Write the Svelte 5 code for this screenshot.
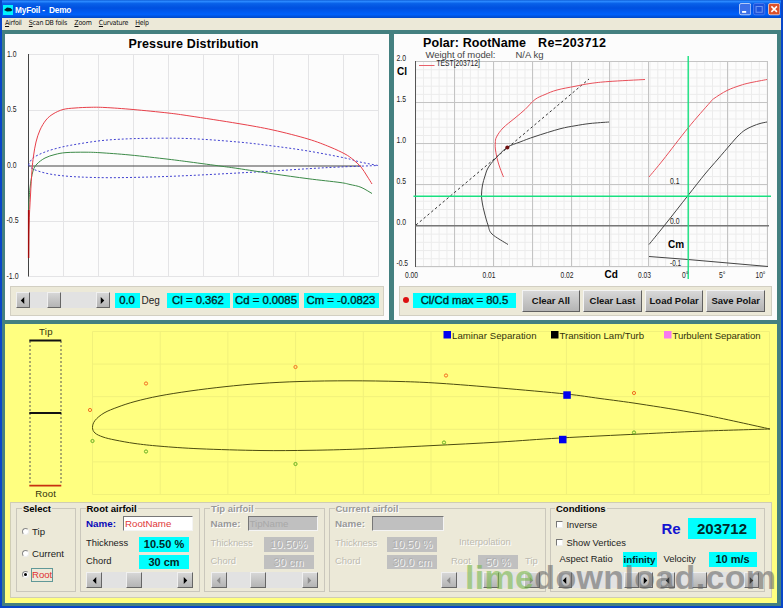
<script>
  const menu = ['Airfoil', 'Scan DB foils', 'Zoom', 'Curvature', 'Help'];

  // smooth path through a list of points
  const curve = (p) => {
    let d = `M${p[0][0]} ${p[0][1]}`;
    for (let i = 0; i < p.length - 1; i++) {
      const a = p[i - 1] || p[i];
      const b = p[i];
      const c = p[i + 1];
      const e = p[i + 2] || c;
      d += `C${b[0] + (c[0] - a[0]) / 6} ${b[1] + (c[1] - a[1]) / 6} ${c[0] - (e[0] - b[0]) / 6} ${c[1] - (e[1] - b[1]) / 6} ${c[0]} ${c[1]}`;
    }
    return d;
  };
  const steps = (from, step, count) => Array.from({ length: count }, (_, i) => from + i * step);

  // pressure
  const cpUpper = [[28.5, 258], [29, 225], [30.5, 195], [32, 170], [33.5, 156], [36, 142], [40, 130], [46, 120], [53, 114], [63, 109.5], [75, 108], [90, 107.3], [105, 107.5], [133, 109.5], [168, 113], [190, 116], [238, 123.5], [273, 130], [308, 139], [330, 147], [345, 154], [353, 159.5], [361, 167], [367, 176], [372, 184]];
  const cpLower = [[28.5, 258], [28.8, 210], [30, 188], [33, 171], [37, 164], [45, 158], [55, 154.5], [66, 152.6], [85, 152.2], [100, 152.7], [130, 155], [168, 159.2], [190, 162], [222, 166.3], [238, 168.5], [273, 173.8], [308, 178.7], [340, 182.5], [350, 184.5], [361, 187.3], [372, 193.5]];
  const shapeTop = [[28.5, 165], [33, 158], [45, 152], [60, 147.5], [75, 144.5], [98, 141], [120, 139.2], [150, 138.3], [190, 138.6], [238, 142], [273, 146], [308, 151], [345, 158], [360, 162], [378, 165.5]];
  const shapeBottom = [[28.5, 165], [33, 169], [45, 173], [60, 175.5], [80, 177], [110, 177.7], [150, 177], [190, 175.5], [238, 173], [273, 171], [308, 168.7], [340, 167], [378, 165.5]];

  // polars
  const redPolar = [[503.5, 177], [500, 168], [497.5, 160], [495.5, 150], [495.3, 143], [496.5, 137], [503, 128], [515, 118], [525, 109.5], [535, 99.5], [545, 94.5], [557, 90], [575, 86.3], [590, 83.5], [609, 81.5], [645, 79.5]];
  const blackPolar = [[508, 244.5], [492, 234], [488, 225], [484.5, 213], [482.3, 203], [481.5, 195], [482.5, 185], [485, 176], [488, 168], [495, 159], [507, 147.5], [520, 142], [535, 136.5], [560, 128.8], [575, 125.8], [590, 123.5], [609, 122]];
  const redLift = [[649, 177], [663, 160], [688, 128], [710, 102.5], [714, 98.5], [727, 90.5], [740, 85.5], [750, 82.8], [767, 79.5]];
  const blackLift = [[649, 244.5], [664, 226], [688, 195.5], [705, 174], [718, 159], [730, 145], [738, 136], [745, 130], [753, 126], [760, 123.5], [767, 122]];

  // airfoil
  const foil = [[770, 429], [700, 414], [640, 404], [600, 398.5], [566, 394], [500, 388], [440, 383.3], [400, 381.5], [350, 380.8], [300, 381.5], [260, 383.5], [225, 386.7], [190, 391], [159, 396], [135, 401.5], [118, 407], [104, 413], [95, 420.5], [92.5, 427.5], [95, 433], [103, 437], [115, 440], [135, 443.5], [160, 446.2], [200, 448.8], [260, 450.5], [310, 450.3], [360, 449], [430, 445.7], [500, 442], [560, 438], [640, 434], [700, 431.2], [770, 429]];
  const upperPoints = [[90, 410], [146, 383.5], [295.5, 367], [446, 375.5], [634, 393]];
  const lowerPoints = [[92.5, 441], [146, 451.5], [295.5, 464], [444, 442.5], [634, 432.5]];
  const legend = [
    { x: 443.5, color: '#0000ee', text: 'Laminar Separation', w: 84.5 },
    { x: 551, color: '#000', text: 'Transition Lam/Turb', w: 84.5 },
    { x: 664, color: '#f878f0', text: 'Turbulent Separation', w: 88 }
  ];

  const cpLabels = [['1.0', 56.5, 7], ['0.5', 112, 7], ['0.0', 168, 7], ['-0.5', 223, 6.5], ['-1.0', 279, 6.5]];
  const clLabels = [['2.0', 61], ['1.5', 101.5], ['1.0', 142.5], ['0.5', 183.5], ['0.0', 224.5], ['-0.5', 266]];
  const cdLabels = [['0.00', 405, 13], ['0.01', 482.5, 13], ['0.02', 560.5, 13], ['0.03', 638, 13], ['0°', 682, 6.5], ['5°', 719, 6.5], ['10°', 755.5, 10]];
</script>

{#snippet tick(label, x, y, width)}
  <text class="tick" {x} {y} textLength={width} lengthAdjust="spacingAndGlyphs">{label}</text>
{/snippet}

{#snippet scroll(width, thumb, size, disabled)}
  <div class="scroll" class:disabled style="width: {width}px; --size: {size}px">
    <span class="arrow"><svg viewBox="0 0 8 8"><path d="M6 0v8L2 4z" /></svg></span>
    <span class="track"><i class="thumb" style="margin-left: {thumb}px"></i></span>
    <span class="arrow"><svg viewBox="0 0 8 8"><path d="M2 0v8l4-4z" /></svg></span>
  </div>
{/snippet}

<div class="window">
  <header class="titlebar">
    <svg class="app-icon" viewBox="0 0 10 10"><rect width="10" height="10" fill="#00f4ff" /><path d="M1 5 4 2.5 7.5 3 9.5 5 8 6.2 4 6.5z" fill="#002030" /></svg>
    <span class="caption">MyFoil -&nbsp; Demo</span>
    <div class="buttons">
      <svg viewBox="0 0 12 12"><rect x=".5" y=".5" width="11" height="11" rx="1.5" fill="#3c70e8" stroke="#d5e0fa" stroke-width=".8" /><path d="M3 8.7h4" stroke="#fff" stroke-width="1.8" /></svg>
      <svg viewBox="0 0 12 12"><rect x=".5" y=".5" width="11" height="11" rx="1.5" fill="#1c52dc" stroke="#4c7df0" stroke-width=".8" /><path d="M3 3.5h6V9H3z" fill="none" stroke="#6f97f2" /></svg>
      <svg viewBox="0 0 12 12"><rect x=".5" y=".5" width="11" height="11" rx="1.5" fill="#dd5028" stroke="#f4d5cc" stroke-width=".8" /><path d="m3.3 3.3 5.4 5.4m0-5.4L3.3 8.7" stroke="#fff" stroke-width="1.5" /></svg>
    </div>
  </header>
  <nav>
    {#each menu as item}
      <span><u>{item[0]}</u>{item.slice(1)}</span>
    {/each}
  </nav>

  <main>
    <div class="charts">
      <section class="panel">
        <svg class="chart" width="384" height="252" viewBox="5 34 384 252">
          <text class="title" x="128.5" y="48" textLength="130">Pressure Distribution</text>
          <g class="grid">
            {#each steps(63.5, 35, 10) as x}
              <path d="M{x} 54.5V276.5" />
            {/each}
            {#each [54.5, 110.5, 221.5, 276.5] as y}
              <path d="M28 {y}H378.5" />
            {/each}
          </g>
          {#each cpLabels as [label, y, x]}
            {@render tick(label, x, y, label.length > 3 ? 12 : 9.5)}
          {/each}
          <path class="line" stroke="#444" d="M28.5 54V276.5M28 166H361" />
          <path class="line dash" stroke="#4040d0" d={curve(shapeTop)} />
          <path class="line dash" stroke="#4040d0" d={curve(shapeBottom)} />
          <path class="line" stroke="#3c8a48" d={curve(cpLower)} />
          <path class="line" stroke="#e8404a" d={curve(cpUpper)} />
          <path d="M28.6 210V258" stroke="#a00c0c" stroke-width="1.4" />
        </svg>
        <div class="bar left">
          {@render scroll(94, 17, 14, false)}
          <b class="value" style="width: 25px">0.0</b>
          <span class="deg">Deg</span>
          <b class="value" style="width: 63px">Cl = 0.362</b>
          <b class="value" style="width: 66px">Cd = 0.0085</b>
          <b class="value" style="width: 75px">Cm = -0.0823</b>
        </div>
      </section>

      <section class="panel">
        <svg class="chart" width="383" height="252" viewBox="394 34 383 252">
          <text class="title" x="423" y="47" textLength="103">Polar: RootName</text>
          <text class="title" x="538" y="47" textLength="68">Re=203712</text>
          <text class="note" x="425.5" y="57.5" textLength="70">Weight of model:</text>
          <text class="note" x="515.5" y="57.5" textLength="28">N/A kg</text>
          <g class="grid minor">
            {#each steps(415.7, 7.81, 46) as x}
              <path d="M{x} 61.5V267" />
            {/each}
            {#each steps(61.5, 8.22, 26) as y}
              <path d="M415.5 {y}H768" />
            {/each}
          </g>
          <g class="grid major">
            {#each [454.5, 493.5, 532.5, 571.5, 609.5, 648.5, 727.5, 767.5] as x}
              <path d="M{x} 61.5V267" />
            {/each}
            {#each [61.5, 102.5, 143.5, 184.5, 266.5] as y}
              <path d="M415.5 {y}H768" />
            {/each}
          </g>
          <path d="M415.5 61V267" stroke="#555" />
          <path d="M415.5 225.8H769" stroke="#777" stroke-width="1.4" />
          <path class="line" stroke="#e8606a" d="M419 65.5h15.5" />
          {@render tick('TEST[203712]', 436.5, 65.8, 43.5)}
          <path class="line dash long" stroke="#333" d="M416 225 589 79" />
          <path class="line" stroke="#e8505a" d={curve(redPolar)} />
          <path class="line" stroke="#e8505a" d={curve(redLift)} />
          <path class="line" stroke="#444" d={curve(blackPolar)} />
          <path class="line" stroke="#444" d={curve(blackLift)} />
          <path class="line" stroke="#444" d="M649 256.5 688 259.5 768 266.5" />
          <circle cx="507.3" cy="147.5" r="2" fill="#701010" />
          <path d="M413.5 196.3H771M688.2 56V279" stroke="#18e080" stroke-width="1.4" />
          {#each clLabels as [label, y]}
            {@render tick(label, 396.5, y, label.length > 3 ? 11.5 : 9.5)}
          {/each}
          {#each cdLabels as [label, x, w]}
            {@render tick(label, x, 278, w)}
          {/each}
          {@render tick('0.1', 670, 184, 9.5)}
          {@render tick('0.0', 670, 224.3, 9.5)}
          {@render tick('-0.1', 670, 266, 11)}
          <text class="axis" x="397" y="74.5">Cl</text>
          <text class="axis" x="604.5" y="278">Cd</text>
          <text class="axis" x="668" y="248.3">Cm</text>
        </svg>
        <div class="bar right">
          <i class="led"></i>
          <b class="value" style="width: 103px">Cl/Cd max = 80.5</b>
          <div class="actions">
            <button>Clear All</button>
            <button>Clear Last</button>
            <button>Load Polar</button>
            <button>Save Polar</button>
          </div>
        </div>
      </section>
    </div>

    <section class="foil">
      <svg class="chart" width="772" height="178" viewBox="5 324 772 178">
        <g class="grid">
          {#each steps(92.5, 67.7, 11) as x}
            <path d="M{x} 331.5V494.5" />
          {/each}
          {#each steps(331.5, 32.6, 6) as y}
            <path d="M92.5 {y}H769.5" />
          {/each}
        </g>
        <text class="label" x="39" y="334.7" textLength="13.5">Tip</text>
        <path d="M30 341V485M61 341V485" stroke="#555" stroke-dasharray="2 2" />
        <path d="M29.3 340.5H61.3M29.3 413H61.3" stroke="#111" stroke-width="1.8" />
        <path d="M29.3 485.7H61.3" stroke="#c83010" stroke-width="1.8" />
        <text class="label" x="35.3" y="497.2" textLength="20.5">Root</text>
        {#each legend as item}
          <rect x={item.x} y="331" width="7.5" height="7.5" fill={item.color} />
          <text class="label" x={item.x + 8.5} y="338.5" textLength={item.w}>{item.text}</text>
        {/each}
        <path class="line" stroke="#4c4c10" d={curve(foil)} />
        {#each upperPoints as [x, y]}
          <circle cx={x} cy={y} r="1.6" fill="none" stroke="#f06018" stroke-width=".9" />
        {/each}
        {#each lowerPoints as [x, y]}
          <circle cx={x} cy={y} r="1.6" fill="none" stroke="#58a818" stroke-width=".9" />
        {/each}
        <rect x="563.3" y="391.3" width="7.5" height="7.5" fill="#0000ee" />
        <rect x="559" y="435.8" width="7.5" height="7.5" fill="#0000ee" />
      </svg>

      <div class="settings">
        <fieldset class="select">
          <legend>Select</legend>
          <label><i class="radio"></i>Tip</label>
          <label><i class="radio"></i>Current</label>
          <label class="picked"><i class="radio on"></i><span>Root</span></label>
        </fieldset>

        <fieldset class="airfoil">
          <legend>Root airfoil</legend>
          <div class="row r1"><b class="name">Name:</b><span class="field" style="width: 70px">RootName</span></div>
          <div class="row r2"><span class="key">Thickness</span><b class="value big">10.50 %</b></div>
          <div class="row r3"><span class="key">Chord</span><b class="value big">30 cm</b></div>
          <div class="row r4">{@render scroll(107, 23.5, 16, false)}</div>
        </fieldset>

        <fieldset class="airfoil off">
          <legend>Tip airfoil</legend>
          <div class="row r1"><b class="name">Name:</b><span class="field" style="width: 70px">TipName</span></div>
          <div class="row r2"><span class="key">Thickness</span><b class="value big">10.50%</b></div>
          <div class="row r3"><span class="key">Chord</span><b class="value big">30 cm</b></div>
          <div class="row r4">{@render scroll(107, 23.5, 16, true)}</div>
        </fieldset>

        <fieldset class="current off">
          <legend>Current airfoil</legend>
          <div class="row r1"><b class="name">Name:</b><span class="field" style="width: 72px"></span></div>
          <div class="row r2"><span class="key">Thickness</span><b class="value big">10.50 %</b><span class="interp">Interpolation</span></div>
          <div class="row r3">
            <span class="key">Chord</span><b class="value big">30.0 cm</b>
            <span class="from">Root</span><b class="value pct">50 %</b><span class="to">Tip</span>
          </div>
          <div class="row r4 end">{@render scroll(99, 26, 16, true)}</div>
        </fieldset>

        <fieldset class="conditions">
          <legend>Conditions</legend>
          <div class="reynolds">
            <div class="checks">
              <label><i class="check"></i>Inverse</label>
              <label><i class="check"></i>Show Vertices</label>
            </div>
            <b class="re">Re</b>
            <b class="value re-value">203712</b>
          </div>
          <div class="row aspect">
            <span class="ratio">Aspect Ratio</span><b class="value infinity">infinity</b>
            <span class="velocity">Velocity</span><b class="value speed">10 m/s</b>
          </div>
          <div class="row r4 pair">
            {@render scroll(95, 52, 15, false)}
            {@render scroll(99, 17, 15, false)}
          </div>
        </fieldset>
      </div>
    </section>
  </main>

  <svg class="watermark" width="320" height="44" viewBox="460 556 320 44">
    <text x="465" y="588.5" textLength="311"><tspan fill="#78b848">lime</tspan><tspan fill="#686868">download.com</tspan></text>
  </svg>
</div>

<style>
  :global(body) {
    margin: 0;
    background: #448080;
  }

  .window {
    position: relative;
    display: flex;
    flex-direction: column;
    box-sizing: border-box;
    width: 783px;
    height: 608px;
    overflow: hidden;
    font-family: "Liberation Sans", Arial, sans-serif;
    font-size: 9.4px;
    color: #222;
    background: #448080;
    border: solid #0846c8;
    border-width: 0 2px 2px;
  }

  .titlebar {
    display: flex;
    align-items: center;
    flex: none;
    height: 18px;
    margin: 0 -2px;
    padding: 1px 3px 0;
    box-sizing: border-box;
    background: linear-gradient(#1060d8 0, #2a88ff 8%, #0860e8 20%, #0050e0 45%, #0060fa 80%, #0048c8 100%);
  }

  .app-icon {
    width: 10px;
    height: 10px;
  }

  .caption {
    flex: 1;
    margin-left: 2px;
    color: #fff;
    font-weight: bold;
    font-size: 8.3px;
    line-height: 12px;
    letter-spacing: -0.2px;
    white-space: nowrap;
  }

  .buttons {
    display: flex;
    gap: 2px;
  }

  .buttons svg {
    width: 12.3px;
    height: 12.3px;
  }

  nav {
    display: flex;
    flex: none;
    gap: 7.3px;
    height: 12px;
    padding-left: 3px;
    background: #ece9d8;
    font-family: "DejaVu Sans Condensed", "DejaVu Sans", sans-serif;
    font-size: 7px;
    line-height: 11px;
    letter-spacing: -0.24px;
    color: #111;
    white-space: nowrap;
  }

  main {
    padding: 4px 4px 0 3px;
  }

  .charts {
    display: flex;
    justify-content: space-between;
  }

  .panel {
    height: 286px;
    background: #fcfcfc;
  }

  .chart {
    display: block;
  }

  text {
    fill: #222;
  }

  .title {
    font-size: 12.5px;
    font-weight: bold;
    fill: #000;
  }

  .tick {
    font-size: 8.3px;
  }

  .note {
    font-size: 9.5px;
    fill: #444;
  }

  .axis {
    font-size: 10px;
    font-weight: bold;
    fill: #000;
  }

  .label {
    font-size: 9.6px;
    fill: #33330c;
  }

  .grid path {
    stroke: #e4e4e6;
  }

  .minor path {
    stroke: #ececec;
  }

  .major path {
    stroke: #c4c4c4;
  }

  .foil .grid path {
    stroke: #f1f17a;
  }

  .line {
    fill: none;
    stroke-width: 1;
  }

  .dash {
    stroke-dasharray: 2 2;
  }

  .long {
    stroke-dasharray: 2.5 2.5;
  }

  .bar {
    display: flex;
    align-items: center;
    box-sizing: border-box;
    height: 30px;
    padding-bottom: 2px;
    margin: 0 5px;
    background: #ece9d8;
    border: 1px solid #d2cfc2;
  }

  .left {
    padding-left: 4.5px;
  }

  .left .value:nth-of-type(1) {
    margin-left: 5px;
  }

  .left .value:nth-of-type(3) {
    margin: 0 4.5px 0 3.5px;
  }

  .deg {
    width: 27px;
    padding-left: 2px;
    box-sizing: border-box;
    font-size: 10px;
  }

  .right {
    padding-left: 3px;
  }

  .led {
    width: 6px;
    height: 6px;
    margin-right: 4px;
    border-radius: 50%;
    background: #dc1010;
  }

  .value {
    height: 15px;
    flex: none;
    background: #00ffff;
    color: #002828;
    font-size: 11.3px;
    font-weight: normal;
    line-height: 15px;
    text-align: center;
    white-space: nowrap;
    -webkit-text-stroke: 0.35px #002828;
  }

  .actions {
    display: flex;
    gap: 2.8px;
    margin: 1px 0 0 5.5px;
  }

  button {
    width: 58.8px;
    height: 22px;
    padding: 0;
    border: 1px solid;
    border-color: #f4f4f4 #606060 #606060 #f4f4f4;
    border-radius: 0;
    background: linear-gradient(#d8d8d8, #b4b4b4);
    font: bold 9.5px "Liberation Sans", Arial, sans-serif;
    color: #111;
    white-space: nowrap;
  }

  .scroll {
    display: flex;
    flex: none;
    height: 16px;
    background: #e2e2e2;
  }

  .arrow,
  .thumb {
    box-sizing: border-box;
    width: var(--size);
    height: 16px;
    border: 1px solid;
    border-color: #f0f0f0 #666 #666 #f0f0f0;
    background: linear-gradient(#d6d6d6, #b4b4b4);
  }

  .arrow {
    display: flex;
    align-items: center;
    justify-content: center;
  }

  .arrow svg {
    width: 7px;
    height: 7px;
  }

  .disabled .arrow path {
    fill: #8c8c8c;
  }

  .track {
    flex: 1;
  }

  .thumb {
    display: block;
  }

  .foil {
    height: 279px;
    margin-top: 4px;
    background: #ffff80;
  }

  .settings {
    display: flex;
    box-sizing: border-box;
    width: 762px;
    height: 96px;
    margin-left: 5px;
    padding-left: 4.5px;
    background: #ece9d8;
    border: 1px solid #d0cdb4;
  }

  fieldset {
    box-sizing: border-box;
    flex: none;
    min-width: 0;
    height: 88.5px;
    margin: 0 4px 0 0;
    padding: 0 0 0 6px;
    border: 1px solid #cac7bc;
  }

  legend {
    height: 11px;
    padding: 0 1px;
    margin-left: -0.5px;
    font-size: 9.5px;
    font-weight: bold;
    line-height: 11px;
    color: #000;
  }

  .select {
    width: 60px;
  }

  .select label {
    display: flex;
    align-items: center;
    height: 21.5px;
    font-size: 9.6px;
  }

  .select legend + label {
    margin-top: 7px;
  }

  .radio {
    display: flex;
    align-items: center;
    justify-content: center;
    box-sizing: border-box;
    width: 7px;
    height: 7px;
    margin-right: 3.5px;
    margin-left: -1px;
    background: #fff;
    border: 1px solid;
    border-color: #888 #eee #eee #888;
    border-radius: 50%;
  }

  .on::after {
    content: "";
    width: 3px;
    height: 3px;
    border-radius: 50%;
    background: #000;
  }

  .picked span {
    height: 12px;
    line-height: 12px;
    color: #e03030;
    outline: 1px solid #609898;
  }

  .airfoil {
    width: 120.5px;
    padding-left: 5.5px;
  }

  .current {
    width: 217px;
    padding-left: 5.5px;
  }

  .conditions {
    width: 215px;
    margin: 0;
    padding-left: 5px;
  }

  .row {
    display: flex;
    align-items: center;
    white-space: nowrap;
  }

  .r1 {
    height: 19px;
  }

  .r2 {
    height: 22px;
  }

  .r3 {
    height: 14px;
  }

  .r4 {
    height: 22px;
  }

  .name {
    width: 37px;
    color: #0808b8;
    font-size: 9.8px;
  }

  .field {
    box-sizing: border-box;
    height: 15px;
    padding-left: 1px;
    line-height: 14px;
    font-size: 9.7px;
    color: #e03838;
    background: #fff;
    border: 1px solid;
    border-color: #777 #f4f4f4 #f4f4f4 #777;
  }

  .key {
    width: 53px;
    padding-bottom: 3px;
  }

  .big {
    width: 50px;
    font-size: 11px;
    font-weight: bold;
    -webkit-text-stroke: 0;
  }

  .r3 .value {
    height: 14px;
    line-height: 14px;
  }

  .off legend,
  .off .name {
    color: #999;
  }

  .off {
    color: #bcbab0;
    text-shadow: 1px 1px #fff;
  }

  .off .field {
    background: #c0c0c0;
    color: #a8a8a8;
    text-shadow: none;
  }

  .off .value {
    background: #c0c0c0;
    color: #b0b0b0;
    font-weight: normal;
    text-shadow: 1px 1px #f6f6f6;
    -webkit-text-stroke: 0;
  }

  .current .key {
    width: 52px;
  }

  .interp {
    margin: -6px 0 0 22px;
  }

  .from {
    width: 27px;
    margin-left: 14px;
    padding-bottom: 3px;
  }

  .pct {
    width: 40px;
    font-size: 11px;
  }

  .to {
    margin-left: 7px;
    padding-bottom: 3px;
  }

  .end {
    padding-left: 105.5px;
  }

  .reynolds {
    display: flex;
    align-items: flex-start;
    height: 36px;
  }

  .checks {
    width: 106px;
    padding-top: 2px;
  }

  .checks label {
    display: flex;
    align-items: center;
    height: 17.5px;
    font-size: 9.4px;
  }

  .check {
    box-sizing: border-box;
    width: 7px;
    height: 7px;
    margin-right: 4px;
    background: #fff;
    border: 1px solid;
    border-color: #777 #eee #eee #777;
  }

  .re {
    width: 26.5px;
    margin-top: 4px;
    font-size: 15px;
    line-height: 21px;
    color: #1414d0;
  }

  .re-value {
    width: 68px;
    height: 21px;
    margin-top: 4px;
    font-size: 15px;
    font-weight: bold;
    line-height: 21px;
    -webkit-text-stroke: 0;
  }

  .aspect {
    height: 19px;
  }

  .ratio {
    width: 67px;
    padding: 0 0 2px 4px;
    box-sizing: border-box;
  }

  .infinity {
    width: 34px;
    font-size: 9.8px;
    font-weight: bold;
    -webkit-text-stroke: 0;
  }

  .velocity {
    width: 52px;
    padding: 0 0 2px 7px;
    box-sizing: border-box;
  }

  .speed {
    width: 48px;
    font-size: 11px;
    font-weight: bold;
    -webkit-text-stroke: 0;
  }

  .pair {
    gap: 7px;
    padding-left: 2px;
  }

  .watermark {
    position: absolute;
    left: 458px;
    top: 556px;
    overflow: visible;
    opacity: 0.58;
  }

  .watermark text {
    font-size: 34px;
    font-weight: bold;
  }
</style>
